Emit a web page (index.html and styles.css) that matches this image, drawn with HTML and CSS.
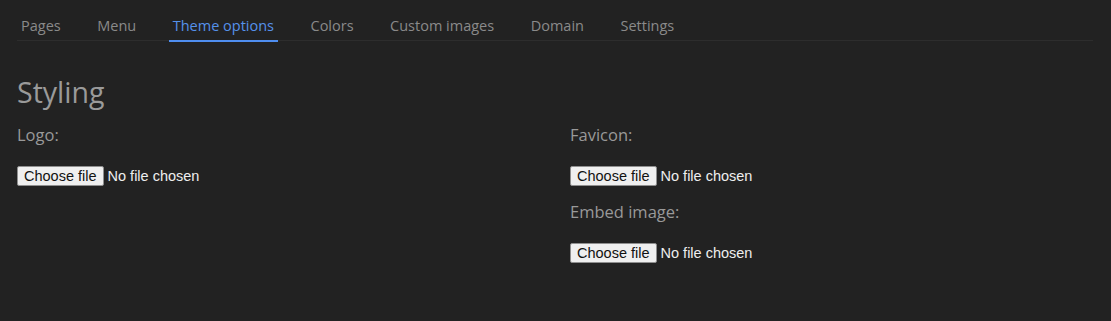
FILE: index.html
```html
<!DOCTYPE html>
<html>
<head>
<meta charset="utf-8">
<link rel="stylesheet" href="styles.css">
</head>
<body>
<div class="page">
  <nav class="tabs">
    <a class="tab">Pages</a>
    <a class="tab">Menu</a>
    <a class="tab active">Theme options</a>
    <a class="tab">Colors</a>
    <a class="tab">Custom images</a>
    <a class="tab">Domain</a>
    <a class="tab">Settings</a>
  </nav>
  <h1 class="title">Styling</h1>
  <div class="grid">
    <div class="col">
      <div class="field">
        <div class="label">Logo:</div>
        <div class="file"><span class="file-btn">Choose file</span><span class="file-name">No file chosen</span></div>
      </div>
    </div>
    <div class="col">
      <div class="field">
        <div class="label">Favicon:</div>
        <div class="file"><span class="file-btn">Choose file</span><span class="file-name">No file chosen</span></div>
      </div>
      <div class="field">
        <div class="label">Embed image:</div>
        <div class="file"><span class="file-btn">Choose file</span><span class="file-name">No file chosen</span></div>
      </div>
    </div>
  </div>
</div>
</body>
</html>
```
FILE: styles.css
```css
html, body {
  margin: 0;
  padding: 0;
  background: #222222;
}
body {
  font-family: "Open Sans", sans-serif;
  color: #999;
}
.page {
  padding: 0 18px 0 17px;
}
.tabs {
  display: flex;
  gap: 28.5px;
  padding-top: 16px;
  border-bottom: 1px solid #2d2d2d;
}
.tab {
  font-size: 14.5px;
  line-height: 20px;
  color: #8a8a8a;
  padding: 0 4px 4px;
  border-bottom: 2px solid transparent;
  margin-bottom: -2px;
}
.tab.active {
  color: #5591ea;
  border-bottom-color: #4f8ef0;
}
.title {
  font-size: 28.5px;
  font-weight: 400;
  color: #9a9a9a;
  margin: 33px 0 0;
  line-height: 36px;
}
.grid {
  display: grid;
  grid-template-columns: 1fr 1fr;
  column-gap: 30px;
}
.field {
  margin-top: 14px;
}
.label {
  font-size: 16.5px;
  line-height: 22px;
  color: #999;
  margin-bottom: 19px;
}
.file {
  display: flex;
  align-items: center;
  height: 22px;
  font-family: "Liberation Sans", Arial, sans-serif;
  font-size: 14.5px;
}
.file-btn {
  background: #efefef;
  color: #111;
  border: 1px solid #8f8f8f;
  border-radius: 2px;
  padding: 0 6px;
  height: 18px;
  line-height: 18px;
}
.file-name {
  color: #eeeeee;
  margin-left: 4px;
}
```
